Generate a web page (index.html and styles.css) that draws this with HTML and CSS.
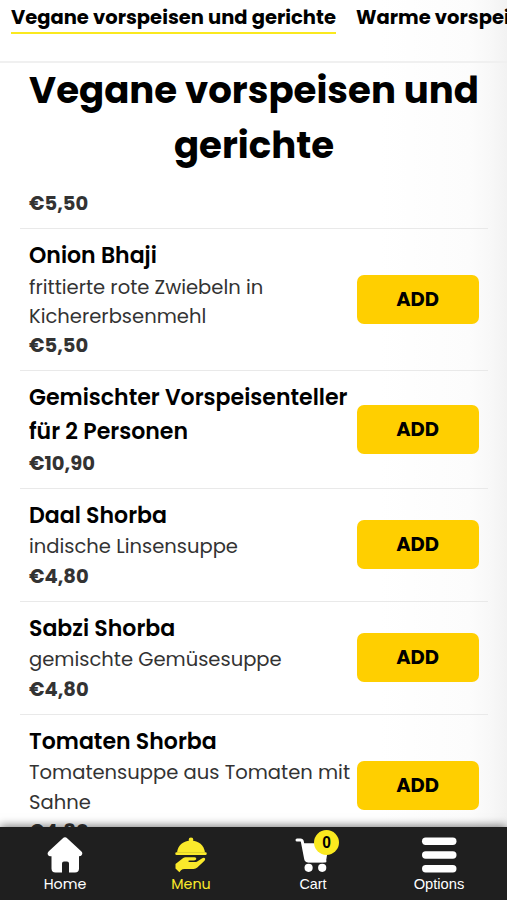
FILE: index.html
```
<!DOCTYPE html>
<html lang="de">
<head>
<meta charset="utf-8">
<title>Vegane vorspeisen und gerichte</title>
<link rel="stylesheet" href="styles.css">
</head>
<body>
<div class="app">
  <nav class="tabs">
    <a class="tab active">Vegane vorspeisen und gerichte</a>
    <a class="tab">Warme vorspeisen</a>
  </nav>
  <main class="menu">
    <h1>Vegane vorspeisen und gerichte</h1>
    <div class="item first"><div class="info"><p class="price">€5,50</p></div></div>
    <div class="item">
      <div class="info"><h2>Onion Bhaji</h2><p>frittierte rote Zwiebeln in Kichererbsenmehl</p><p class="price">€5,50</p></div>
      <button>ADD</button>
    </div>
    <div class="item">
      <div class="info"><h2>Gemischter Vorspeisenteller für 2 Personen</h2><p class="price">€10,90</p></div>
      <button>ADD</button>
    </div>
    <div class="item">
      <div class="info"><h2>Daal Shorba</h2><p>indische Linsensuppe</p><p class="price">€4,80</p></div>
      <button>ADD</button>
    </div>
    <div class="item">
      <div class="info"><h2>Sabzi Shorba</h2><p>gemischte Gemüsesuppe</p><p class="price">€4,80</p></div>
      <button>ADD</button>
    </div>
    <div class="item">
      <div class="info"><h2>Tomaten Shorba</h2><p>Tomatensuppe aus Tomaten mit Sahne</p><p class="price">€4,80</p></div>
      <button>ADD</button>
    </div>
  </main>
  <footer class="bar">
    <a class="link home">
      <svg width="36" height="36" viewBox="0 0 36 36"><path fill="currentColor" d="M15.600 1.400Q18-.7 20.400 1.400L34.200 14.300Q36.200 16.200 34.600 18.200Q33.800 19.300 32 19.300V31.500Q32 35.500 28 35.500H22V26.500Q22 24.500 20 24.500H17Q15 24.500 15 26.500V35.500H8.500Q4.500 35.500 4.500 31.500V19.300H3.500Q1.600 19.300.9 17.800Q0 16 1.800 14.300Z"/></svg>
      <span>Home</span>
    </a>
    <a class="link current">
      <svg width="36" height="36" viewBox="0 0 36 36"><g fill="currentColor"><circle cx="18" cy="2.700" r="2.300"/><path d="M4 15.500C4.800 8.500 10.500 3.600 18 3.600S31.200 8.500 32 15.500Z"/><rect x="2.300" y="15.300" width="31.400" height="2.700" rx="1.200"/><path d="M2.500 27L10.200 21Q11.200 20.200 12.500 20.200H21.500Q23.600 20.400 23.300 22Q23 23.400 21 23.400H16.500Q15.200 23.500 15.300 24.300Q15.400 25.100 16.500 25.100H22Q23.200 25.100 24.200 24.400L29.200 21.200Q31.400 20.200 32.100 21.600Q32.500 22.600 31.500 23.700L24.300 30.500Q22.800 31.900 20.500 31.900H11.500Q9.300 31.900 8 33.300L6.400 35.200L2.500 31.500Z"/></g></svg>
      <span>Menu</span>
    </a>
    <a class="link cart">
      <svg width="36" height="36" viewBox="0 0 36 36"><path d="M2 3H5.500Q7 3 7.300 4.500L10.600 21.500Q11 24 13.300 24H30" fill="none" stroke="currentColor" stroke-width="3" stroke-linecap="round" stroke-linejoin="round"/><path fill="currentColor" d="M7.500 6.200H34L31.300 22.500Q30.800 25.200 28 25.200H13.500Q10.700 25.200 10.200 22.500Z"/><circle cx="13.600" cy="30.800" r="4.100" fill="currentColor"/><circle cx="27.200" cy="30.800" r="4.100" fill="currentColor"/></svg>
      <b class="badge">0</b>
      <span>Cart</span>
    </a>
    <a class="link options">
      <svg width="36" height="36" viewBox="0 0 36 36"><g fill="currentColor"><rect x="1" y="0.500" width="34.500" height="7.500" rx="3.700"/><rect x="1" y="14.200" width="34.500" height="7.500" rx="3.700"/><rect x="1" y="28" width="34.500" height="7.500" rx="3.700"/></g></svg>
      <span>Options</span>
    </a>
  </footer>
</div>
</body>
</html>
```
FILE: styles.css
```
* { box-sizing: border-box; }
body { margin: 0; font-family: Poppins, Inter, sans-serif; color: #333; }
h1, h2, p { margin: 0; }
.app {
  height: 900px;
  display: flex;
  flex-direction: column;
  overflow: hidden;
  background: linear-gradient(90deg, #fff 0, #fff 380px, #fcfcfc 470px, #f8f8f8 490px, #f2f2f2 507px);
}
.tabs {
  flex: none;
  display: flex;
  gap: 20px;
  align-items: flex-start;
  height: 62.500px;
  padding: 3px 0 0 11px;
  border-bottom: 2px solid #f0f0f0;
  overflow: hidden;
}
.tab {
  flex: none;
  height: 31px;
  font-size: 19.500px;
  font-weight: 700;
  line-height: 29px;
  color: #000;
  white-space: nowrap;
}
.tab.active { border-bottom: 2px solid #fae91f; }
.menu { flex: 1; min-height: 0; overflow: hidden; padding: 0 19px 0 20px; }
h1 {
  font-size: 37.100px;
  line-height: 55.600px;
  font-weight: 700;
  text-align: center;
  color: #000;
}
.item {
  display: flex;
  align-items: center;
  justify-content: space-between;
  padding: 9.850px 9px 9.750px;
  border-bottom: 1px solid #e9e9e9;
}
.item.first { height: 55.400px; padding: 15px 9px 9px; }
.info { flex: 1; min-width: 0; font-size: 19.550px; line-height: 29.250px; }
h2 { font-size: 22.050px; line-height: 33.850px; font-weight: 600; color: #000; }
.info .price { font-size: 19.500px; font-weight: 700; }
button {
  flex: none;
  width: 122px;
  height: 49px;
  padding: 0 1px 0 0;
  border: 0;
  border-radius: 7px;
  background: #ffcf00;
  color: #000;
  font: 700 19.500px Poppins, Inter, sans-serif;
}
.bar {
  position: relative;
  flex: none;
  height: 73px;
  display: grid;
  grid-template-columns: 130px 122px 122px 130px;
  background: #1f1f1f;
  color: #fff;
  box-shadow: 0 -1px 9px rgba(0, 0, 0, .55);
}
.link {
  position: relative;
  display: flex;
  flex-direction: column;
  align-items: center;
  padding-top: 10px;
  font-size: 14.300px;
  line-height: 23px;
}
.link svg { flex: none; display: block; }
.current { color: #fae92b; }
.cart, .options { font-family: "Liberation Sans", sans-serif; }
.options { font-size: 14.700px; }
.badge {
  position: absolute;
  left: 62px;
  top: 3px;
  width: 25px;
  height: 25px;
  border-radius: 50%;
  background: #fae91f;
  color: #000;
  font: 700 15.600px/25px "Liberation Sans", sans-serif;
  text-align: center;
}
```
